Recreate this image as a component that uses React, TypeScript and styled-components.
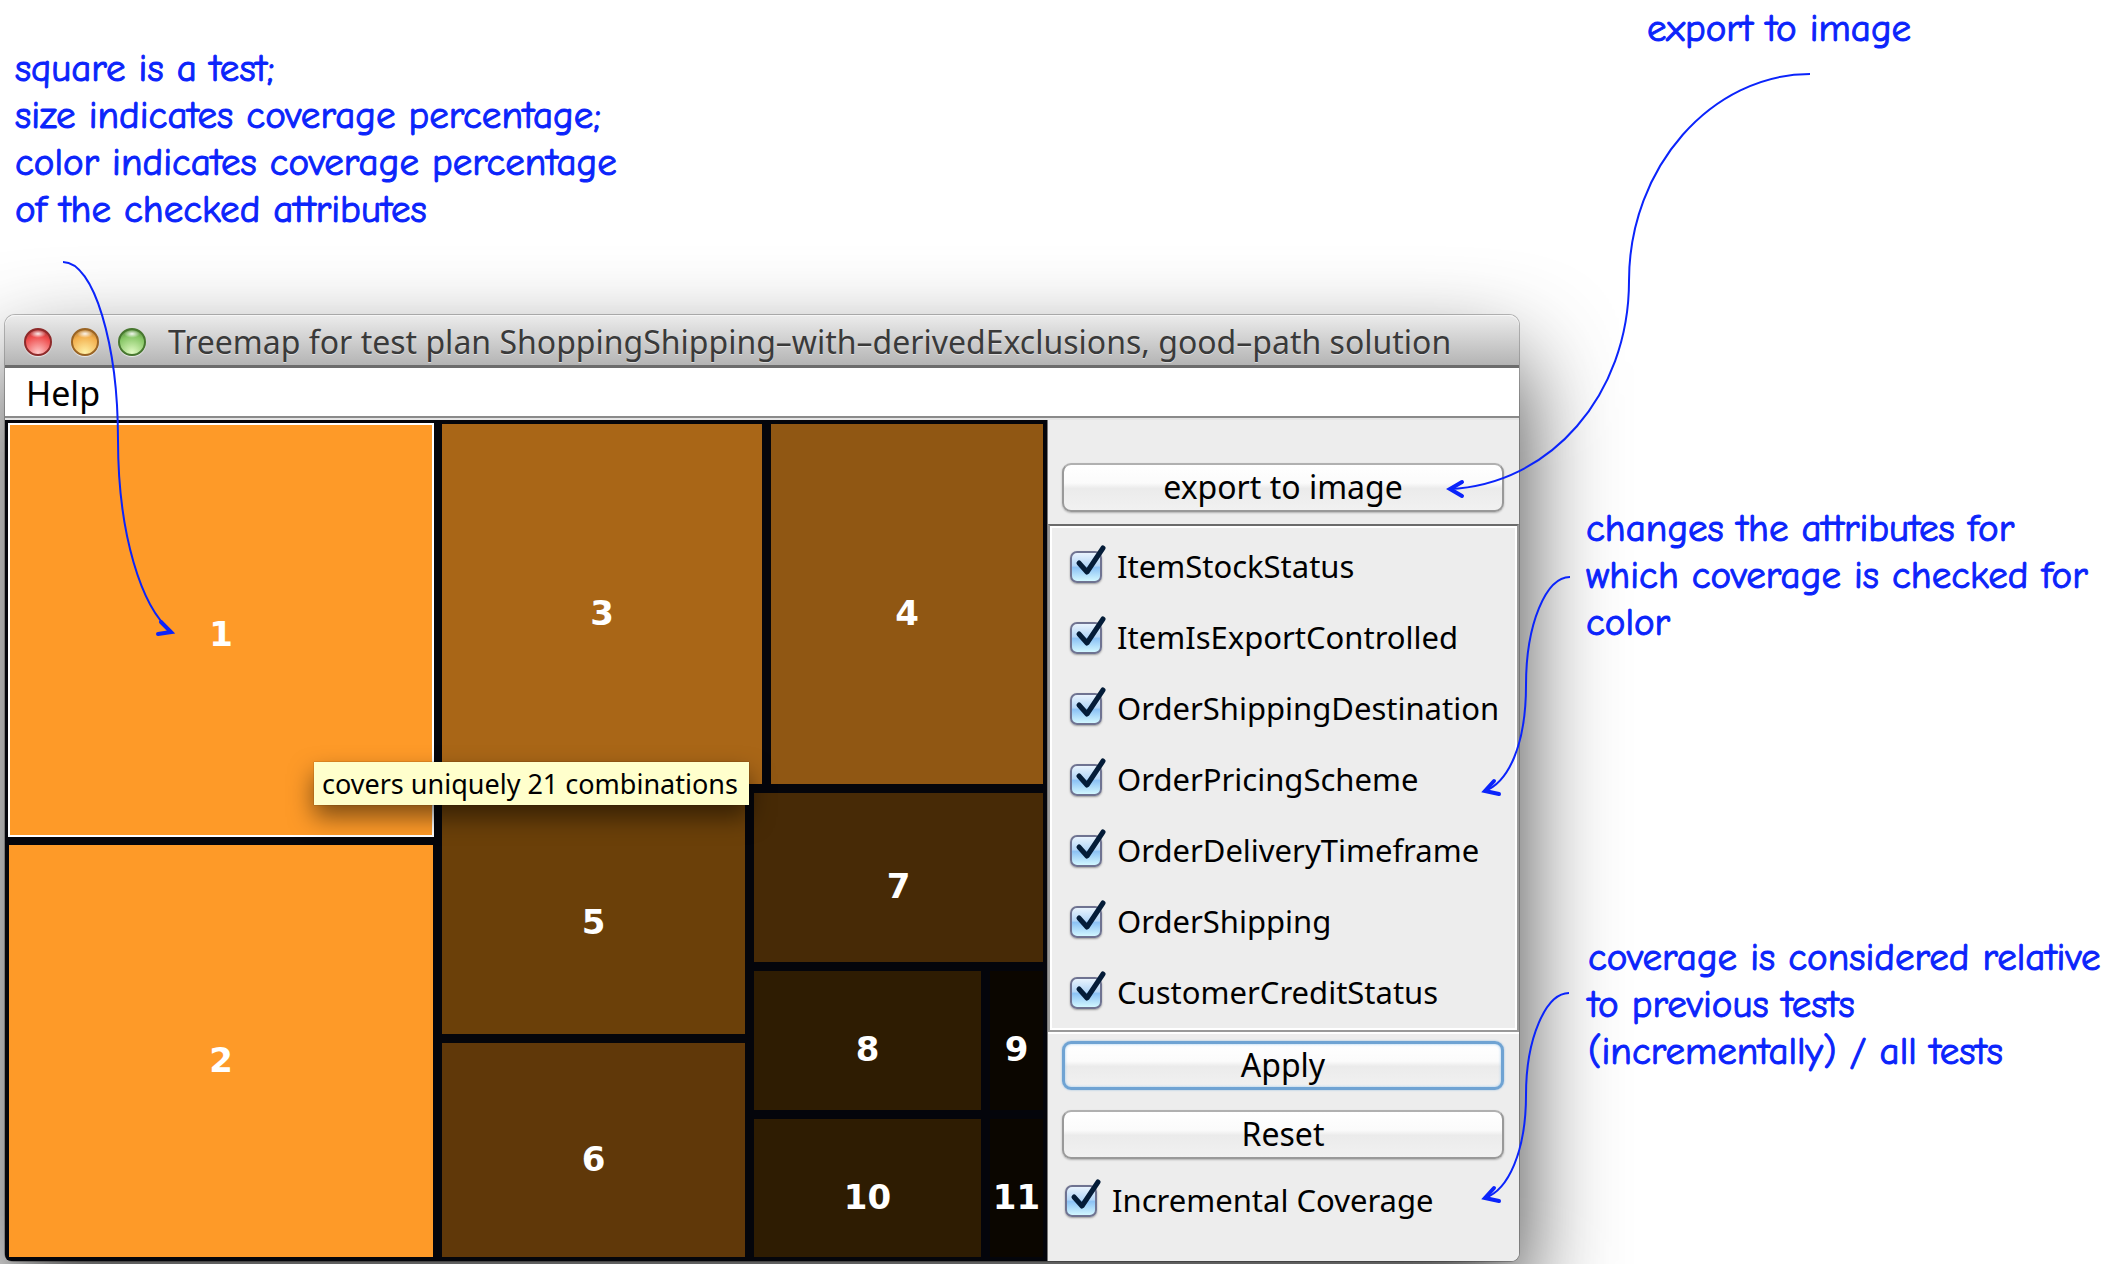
import React, { useId, useState } from "react";
import styled, { createGlobalStyle } from "styled-components";

const INK = "#0b24fb";
const UI_FONT = `"Lucida Grande", "Noto Sans", "Open Sans", sans-serif`;
const NOTE_FONT = `"Comic Sans MS", "Comic Neue", Inter, sans-serif`;

const GlobalStyle = createGlobalStyle`
  *, *::before, *::after { box-sizing: border-box; }
  body { margin: 0; background: #fff; color: #000; font-family: ${UI_FONT}; font-size: 31px; }
  button, input { font: inherit; color: inherit; }
`;

const Page = styled.main`
  position: relative;
  display: grid;
  grid-template-columns: minmax(0, 1514fr) minmax(0, 591fr);
  min-height: 100vh;
  padding: 0 0 3px 5px;
  overflow: hidden;
`;

const Stage = styled.div`
  display: flex;
  flex-direction: column;
`;

const Intro = styled.header`
  height: 315px;
  padding: 45px 0 0 10px;
`;

const Note = styled.p`
  position: relative;
  z-index: 1;
  margin: 0;
  font-family: ${NOTE_FONT};
  font-variant-ligatures: none;
  font-size: 39px;
  line-height: 47px;
  color: ${INK};
  -webkit-text-stroke: 1px ${INK};
  white-space: pre;
`;

const Notes = styled.aside`
  display: flex;
  flex-direction: column;
  padding: 5px 0 0 67px;
`;

const ExportNote = styled(Note)`
  margin-left: 61px;
`;

const AttributesNote = styled(Note)`
  margin-top: 453px;
`;

const CoverageNote = styled(Note)`
  margin-top: 288px;
  margin-left: 2px;
`;

const Window = styled.section`
  display: flex;
  flex: 1;
  flex-direction: column;
  border-radius: 10px 10px 8px 8px;
  box-shadow: 0 0 0 1px rgba(0, 0, 0, 0.25), 0 46px 96px rgba(0, 0, 0, 0.76);
`;

const TitleBar = styled.div`
  display: flex;
  align-items: center;
  height: 53px;
  padding: 3px 0 0 19px;
  border-bottom: 3px solid #6c6c6c;
  border-radius: 10px 10px 0 0;
  background: linear-gradient(#ececec, #b4b4b4);
  box-shadow: inset 0 1px #f6f6f6;
`;

const Lights = styled.div`
  display: flex;
  gap: 19px;
  margin-right: 22px;
`;

const Light = styled.button<{ $rim: string; $core: string; $glow: string }>`
  width: 28px;
  height: 28px;
  padding: 0;
  border: 2px solid ${(p) => p.$rim};
  border-radius: 50%;
  background:
    radial-gradient(ellipse 8px 4px at 50% 16%, rgba(255, 255, 255, 0.9), transparent),
    radial-gradient(circle at 50% 95%, ${(p) => p.$glow}, ${(p) => p.$core} 65%, ${(p) => p.$rim});
  box-shadow: 0 1px 1px rgba(255, 255, 255, 0.7);
`;

const Title = styled.h1`
  margin: 0;
  font-size: 32px;
  font-weight: 400;
  line-height: 40px;
  color: #3a3a3a;
  white-space: nowrap;
  text-shadow: 0 1px rgba(255, 255, 255, 0.5);
`;

const MenuBar = styled.nav`
  display: flex;
  height: 50px;
  padding-left: 16px;
  border-bottom: 2px solid #8a8a8a;
  background: #fff;
`;

const MenuItem = styled.button`
  padding: 0 5px;
  border: 0;
  background: none;
  font-size: 34px;
  line-height: 50px;
`;

const Content = styled.div`
  display: grid;
  flex: 1;
  grid-template-columns: minmax(0, 1042fr) minmax(0, 472fr);
  border-top: 2px solid #e4e4e4;
`;

const Split = styled.div<{ $dir: "row" | "column"; $grow: number }>`
  display: flex;
  flex: ${(p) => p.$grow} 1 0;
  flex-direction: ${(p) => p.$dir};
  gap: 9px;
  min-width: 0;
  min-height: 0;
`;

const Treemap = styled.div`
  position: relative;
  display: flex;
  padding: 4px;
  border-bottom-left-radius: 6px;
  background: #04050b;
`;

const Tile = styled.div<{ $grow: number; $color: string; $selected: boolean }>`
  display: flex;
  flex: ${(p) => p.$grow} 1 0;
  align-items: center;
  justify-content: center;
  min-width: 0;
  min-height: 0;
  outline: ${(p) => (p.$selected ? "2px solid #fff" : "none")};
  outline-offset: -1px;
  background: ${(p) => p.$color};
`;

const TileNumber = styled.span<{ $selected: boolean }>`
  padding-top: ${(p) => (p.$selected ? 8 : 17)}px;
  font-family: "DejaVu Sans", Verdana, sans-serif;
  font-size: 34px;
  font-weight: 700;
  line-height: 40px;
  color: #fff;
`;

const Tooltip = styled.div`
  position: absolute;
  top: 342px;
  left: 309px;
  padding: 0 11px 0 8px;
  background: #ffffcc;
  box-shadow: 0 0 1px rgba(0, 0, 0, 0.5), 0 12px 24px rgba(0, 0, 0, 0.5);
  font-size: 27px;
  line-height: 43px;
  white-space: nowrap;
`;

const Panel = styled.form`
  display: flex;
  flex-direction: column;
  border-left: 1px solid #777;
  border-bottom-right-radius: 8px;
  background: #ededed;
`;

const ExportBar = styled.div`
  display: flex;
  flex-direction: column;
  padding: 43px 15px 12px 14px;
`;

const Actions = styled.div`
  display: flex;
  flex-direction: column;
  gap: 20px;
  padding: 9px 15px 6px 14px;
`;

const PushButton = styled.button<{ $focused?: boolean }>`
  height: 49px;
  padding: 0 0 1px;
  border: ${(p) => (p.$focused ? "3px solid #6fa3d3" : "2px solid #999")};
  border-top-color: ${(p) => (p.$focused ? "#6fa3d3" : "#b0b0b0")};
  border-radius: 9px;
  background: linear-gradient(#fff 0%, #fbfbfb 40%, #ebebeb 52%, #f1f1f1 100%);
  background-clip: padding-box;
  box-shadow: ${(p) =>
    p.$focused ? "0 0 2px #8fb9df, inset 0 0 3px #9cc8ee" : "0 1px 2px rgba(0, 0, 0, 0.25)"};
  font-size: 32px;
  line-height: 40px;
`;

const Group = styled.fieldset`
  display: flex;
  flex-direction: column;
  margin: 0;
  padding: 5px 0 2px 20px;
  border: 2px solid #999;
  border-top: 2px solid #6b6b6b;
  box-shadow: inset 0 0 0 2px #fff, 0 2px #fff;
`;

const CheckRow = styled.label`
  display: flex;
  align-items: center;
  gap: 15px;
  height: 71px;
  white-space: nowrap;
`;

const IncrementalRow = styled(CheckRow)`
  padding-left: 17px;
`;

const CheckText = styled.span`
  padding-bottom: 2px;
`;

const CheckFace = styled.span`
  position: relative;
  flex: none;
  width: 32px;
  height: 32px;
`;

const CheckInput = styled.input`
  display: block;
  width: 32px;
  height: 32px;
  margin: 0;
  appearance: none;
  border: 2px solid #6f7391;
  border-radius: 7px;
  background: linear-gradient(#e8f3fd 0%, #b4d6f7 45%, #8cc2f5 52%, #d2f7ff 100%);
  box-shadow: 0 1px 2px rgba(0, 0, 0, 0.35);
`;

const CheckMark = styled.svg`
  position: absolute;
  top: -7px;
  left: 0;
  pointer-events: none;
`;

const Arrows = styled.svg`
  position: absolute;
  top: 0;
  left: 0;
  pointer-events: none;
  fill: none;
  stroke: ${INK};
  stroke-width: 2;
`;

const ArrowHead = styled.path`
  stroke-width: 4;
  stroke-linecap: round;
`;

type Leaf = { test: number; size: number; color: string };
type Branch = { dir: "row" | "column"; size: number; items: Node[] };
type Node = Leaf | Branch;

const plan: Branch = {
  dir: "row",
  size: 1,
  items: [
    {
      dir: "column",
      size: 424,
      items: [
        { test: 1, size: 1, color: "#fe9a28" },
        { test: 2, size: 1, color: "#fe9a28" },
      ],
    },
    {
      dir: "column",
      size: 601,
      items: [
        {
          dir: "row",
          size: 360,
          items: [
            { test: 3, size: 320, color: "#a96617" },
            { test: 4, size: 272, color: "#905713" },
          ],
        },
        {
          dir: "row",
          size: 464,
          items: [
            {
              dir: "column",
              size: 303,
              items: [
                { test: 5, size: 241, color: "#6b4009" },
                { test: 6, size: 214, color: "#603809" },
              ],
            },
            {
              dir: "column",
              size: 289,
              items: [
                { test: 7, size: 169, color: "#472a06" },
                {
                  dir: "row",
                  size: 287,
                  items: [
                    {
                      dir: "column",
                      size: 227,
                      items: [
                        { test: 8, size: 140, color: "#2e1c02" },
                        { test: 10, size: 138, color: "#2e1c02" },
                      ],
                    },
                    {
                      dir: "column",
                      size: 53,
                      items: [
                        { test: 9, size: 140, color: "#0b0600" },
                        { test: 11, size: 138, color: "#0b0600" },
                      ],
                    },
                  ],
                },
              ],
            },
          ],
        },
      ],
    },
  ],
};

function MapNode({ node }: { node: Node }) {
  if ("test" in node) {
    const selected = node.test === 1;
    return (
      <Tile $grow={node.size} $color={node.color} $selected={selected}>
        <TileNumber $selected={selected}>{node.test}</TileNumber>
      </Tile>
    );
  }
  return (
    <Split $dir={node.dir} $grow={node.size}>
      {node.items.map((item, i) => (
        <MapNode key={i} node={item} />
      ))}
    </Split>
  );
}

function Check({ label, row: Row = CheckRow }: { label: string; row?: React.ElementType }) {
  const id = useId();
  const [on, setOn] = useState(true);
  return (
    <Row htmlFor={id}>
      <CheckFace>
        <CheckInput id={id} type="checkbox" checked={on} onChange={() => setOn(!on)} />
        {on && (
          <CheckMark width="38" height="40" viewBox="0 0 38 40" aria-hidden="true">
            <path
              d="M9 19 L17 28 L33 4"
              fill="none"
              stroke="#041c38"
              strokeWidth="5"
              strokeLinecap="round"
              strokeLinejoin="round"
            />
          </CheckMark>
        )}
      </CheckFace>
      <CheckText>{label}</CheckText>
    </Row>
  );
}

const attributes = [
  "ItemStockStatus",
  "ItemIsExportControlled",
  "OrderShippingDestination",
  "OrderPricingScheme",
  "OrderDeliveryTimeframe",
  "OrderShipping",
  "CustomerCreditStatus",
];

export default function App() {
  return (
    <Page>
      <GlobalStyle />
      <Stage>
        <Intro>
          <Note>
            {"square is a test;\nsize indicates coverage percentage;\ncolor indicates coverage percentage\nof the checked attributes"}
          </Note>
        </Intro>
        <Window>
          <TitleBar>
            <Lights>
              <Light aria-label="Close" $rim="#8e2a2a" $core="#ee4b4b" $glow="#ffc9c9" />
              <Light aria-label="Minimize" $rim="#9a6424" $core="#f2ae4c" $glow="#fff2a8" />
              <Light aria-label="Zoom" $rim="#47772f" $core="#86c665" $glow="#e2fbc4" />
            </Lights>
            <Title>Treemap for test plan ShoppingShipping–with–derivedExclusions, good–path solution</Title>
          </TitleBar>
          <MenuBar>
            <MenuItem type="button">Help</MenuItem>
          </MenuBar>
          <Content>
            <Treemap>
              <MapNode node={plan} />
              <Tooltip role="tooltip">covers uniquely 21 combinations</Tooltip>
            </Treemap>
            <Panel onSubmit={(e) => e.preventDefault()}>
              <ExportBar>
                <PushButton type="button">export to image</PushButton>
              </ExportBar>
              <Group aria-label="Attributes">
                {attributes.map((name) => (
                  <Check key={name} label={name} />
                ))}
              </Group>
              <Actions>
                <PushButton type="submit" $focused>
                  Apply
                </PushButton>
                <PushButton type="reset">Reset</PushButton>
              </Actions>
              <Check label="Incremental Coverage" row={IncrementalRow} />
            </Panel>
          </Content>
        </Window>
      </Stage>
      <Notes>
        <ExportNote>export to image</ExportNote>
        <AttributesNote>
          {"changes the attributes for\nwhich coverage is checked for\ncolor"}
        </AttributesNote>
        <CoverageNote>
          {"coverage is considered relative\nto previous tests\n(incrementally) / all tests"}
        </CoverageNote>
      </Notes>
      <Arrows width="2110" height="1264" viewBox="0 0 2110 1264" aria-hidden="true">
        <path d="M63 262 C94 262 118 345 118 440 S142 608 171 631" />
        <ArrowHead d="M161 622 L171 632 L158 634" />
        <path d="M1810 74 C1712 74 1629 167 1629 281 S1550 485 1449 489" />
        <ArrowHead d="M1462 482 L1450 489 L1462 496" />
        <path d="M1570 577 C1546 577 1526 624 1526 685 S1508 782 1485 791" />
        <ArrowHead d="M1494 781 L1485 791 L1499 794" />
        <path d="M1569 993 C1546 993 1526 1038 1526 1095 S1508 1190 1485 1198" />
        <ArrowHead d="M1494 1188 L1485 1198 L1499 1201" />
      </Arrows>
    </Page>
  );
}
